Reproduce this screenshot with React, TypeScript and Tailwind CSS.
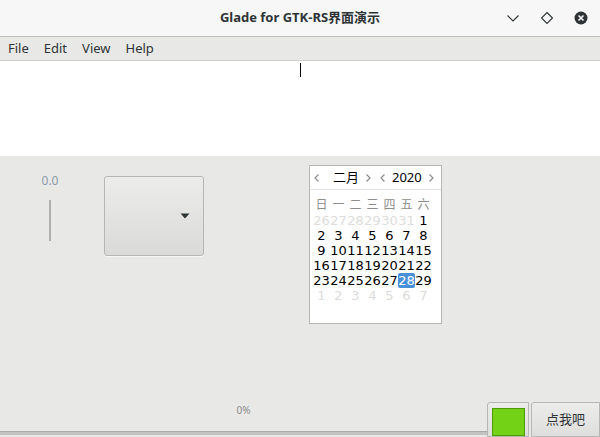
import React from "react";

const FONT = { fontFamily: '"Noto Sans", "Noto Sans CJK SC", sans-serif' };

const DAY_NAMES = ["日", "一", "二", "三", "四", "五", "六"];

type Cell = { n: number; dim?: boolean; sel?: boolean };

const ROWS: Cell[][] = [
  [26, 27, 28, 29, 30, 31].map((n) => ({ n, dim: true })).concat([{ n: 1 }]),
  [2, 3, 4, 5, 6, 7, 8].map((n) => ({ n })),
  [9, 10, 11, 12, 13, 14, 15].map((n) => ({ n })),
  [16, 17, 18, 19, 20, 21, 22].map((n) => ({ n })),
  [23, 24, 25, 26, 27, 28, 29].map((n) => ({ n, sel: n === 28 })),
  [1, 2, 3, 4, 5, 6, 7].map((n) => ({ n, dim: true })),
];

function Chevron({ dir }: { dir: "left" | "right" }) {
  return (
    <svg width="8" height="10" viewBox="0 0 8 10" className="shrink-0 text-[#8d8d8b]">
      <path
        d={dir === "left" ? "M5.5 1.5 L2 5 L5.5 8.5" : "M2.5 1.5 L6 5 L2.5 8.5"}
        fill="none"
        stroke="currentColor"
        strokeWidth="1.2"
      />
    </svg>
  );
}

function TitleBar() {
  return (
    <div className="h-[37px] shrink-0 bg-[#f7f7f7] border-b border-[#bdbdbb] flex items-center relative">
      <div className="flex-1 text-center text-[13px] font-bold text-[#2e3436]">
        Glade for GTK-RS界面演示
      </div>
      <div className="absolute right-[12px] top-0 h-full flex items-center gap-[20px]">
        <svg width="14" height="14" viewBox="0 0 14 14">
          <path d="M1.5 4.5 L7 10 L12.5 4.5" fill="none" stroke="#2e3436" strokeWidth="1.1" />
        </svg>
        <svg width="14" height="14" viewBox="0 0 14 14">
          <path d="M7 1.5 L12.5 7 L7 12.5 L1.5 7 Z" fill="none" stroke="#2e3436" strokeWidth="1.1" />
        </svg>
        <svg width="14" height="14" viewBox="0 0 14 14">
          <circle cx="7" cy="7" r="6.5" fill="#2e3436" />
          <path d="M4.5 4.5 L9.5 9.5 M9.5 4.5 L4.5 9.5" stroke="#f7f7f7" strokeWidth="1.6" />
        </svg>
      </div>
    </div>
  );
}

function MenuBar() {
  return (
    <div className="h-[24px] shrink-0 bg-[#e8e8e7] border-b border-[#cfcfcd] flex items-center pl-[8px] gap-[15px] text-[13px] text-[#2e3436]">
      <span>File</span>
      <span>Edit</span>
      <span>View</span>
      <span>Help</span>
    </div>
  );
}

function Calendar() {
  return (
    <div className="w-[133px] h-[159px] bg-white border border-[#b6b6b3] flex flex-col">
      <div className="h-[24px] flex items-center pl-[3px] text-[13px] text-black border-b border-[#e2e2e0] whitespace-nowrap">
        <Chevron dir="left" />
        <span className="ml-[12px] w-[22px] shrink-0">二月</span>
        <span className="ml-[9px] flex">
          <Chevron dir="right" />
        </span>
        <span className="ml-[7px] flex">
          <Chevron dir="left" />
        </span>
        <span className="ml-[5px]">2020</span>
        <span className="ml-[5px] flex">
          <Chevron dir="right" />
        </span>
      </div>
      <div className="px-[3px] pt-[7px]">
        <div className="grid grid-cols-[repeat(7,17px)] h-[16px] text-[12px] text-[#8d8d8b] leading-[16px]">
          {DAY_NAMES.map((d) => (
            <span key={d} className="text-center">
              {d}
            </span>
          ))}
        </div>
        {ROWS.map((row, i) => (
          <div
            key={i}
            className="grid grid-cols-[repeat(7,17px)] h-[15px] text-[13px] leading-[15px]"
            style={{ fontFamily: '"DejaVu Sans", sans-serif' }}
          >
            {row.map((c, j) => (
              <span
                key={j}
                className={
                  c.sel
                    ? "text-center bg-[#4a90d9] text-white rounded-[2px]"
                    : c.dim
                      ? "text-center text-[#dcdcda]"
                      : "text-center text-black"
                }
              >
                {c.n}
              </span>
            ))}
          </div>
        ))}
      </div>
    </div>
  );
}

export default function App() {
  return (
    <div className="w-[600px] h-[437px] flex flex-col overflow-hidden bg-[#e8e8e7]" style={FONT}>
      <TitleBar />
      <MenuBar />
      <div className="h-[95px] shrink-0 bg-white relative">
        <div className="absolute left-[300px] top-[2px] w-[1px] h-[14px] bg-black" />
      </div>
      <div className="flex-1 flex flex-col">
        <div className="flex items-start">
          <div className="ml-[25px] mt-[16px] w-[50px] flex flex-col items-center">
            <span className="text-[12px] text-[#8c9aa8]">0.0</span>
            <div className="mt-[10px] w-[2px] h-[41px] bg-[#b0b0ae]" />
          </div>
          <div className="ml-[29px] mt-[20px] w-[100px] h-[80px] rounded-[3px] border border-[#b6b6b3] bg-gradient-to-b from-[#ececeb] to-[#dadad8] flex items-center justify-end pr-[13px] shadow-[0_1px_0_rgba(255,255,255,0.7)]">
            <svg width="10" height="6" viewBox="0 0 10 6">
              <path d="M0.5 0.5 L9.5 0.5 L5 5.5 Z" fill="#2e3436" />
            </svg>
          </div>
          <div className="ml-[105px] mt-[9px]">
            <Calendar />
          </div>
        </div>
        <div className="flex-1" />
        <div className="h-[35px] flex items-stretch">
          <div className="flex-1 flex flex-col">
            <div className="text-center text-[10px] text-[#8d8d8b] pt-[1px]">0%</div>
            <div className="flex-1" />
            <div className="h-[4px] bg-[#c2c2c0] border-t border-[#aaaaa8] mb-[2px]" />
          </div>
          <div className="w-[42px] border border-[#b6b6b3] rounded-tl-[3px] bg-gradient-to-b from-[#ececeb] to-[#dededc] flex items-end justify-center">
            <div className="w-[33px] h-[28px] bg-[#73d216] border border-[#4e9a06]" />
          </div>
          <div className="w-[69px] ml-[2px] border border-[#b6b6b3] rounded-tl-[3px] bg-gradient-to-b from-[#ececeb] to-[#dededc] flex items-center justify-center text-[13px] text-[#2e3436]">
            点我吧
          </div>
        </div>
      </div>
    </div>
  );
}
